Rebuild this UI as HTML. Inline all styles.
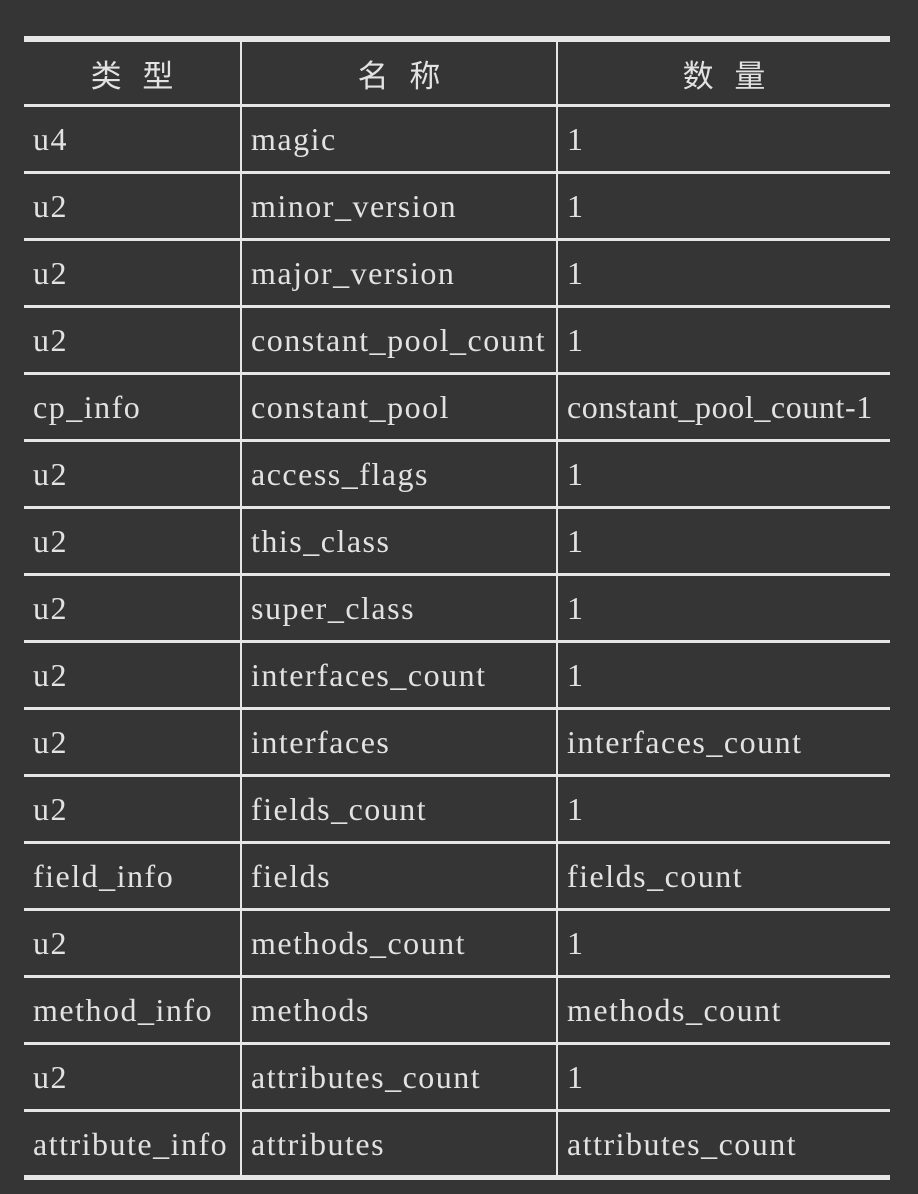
<!DOCTYPE html>
<html><head><meta charset="utf-8"><style>
html,body{margin:0;padding:0;background:#353535;width:918px;height:1194px;overflow:hidden}
.l{position:absolute;background:#e6e6e6}
.t{position:absolute;color:#e2e2e2;font-family:"Liberation Serif",serif;font-size:32px;letter-spacing:1.5px;line-height:67px;white-space:nowrap}
.h{font-family:"Noto Sans CJK SC","Noto Serif CJK SC",sans-serif;font-size:31px;letter-spacing:0;text-align:center;line-height:63px}
</style></head><body>
<div class="l" style="left:24px;top:36px;width:866px;height:6px"></div>
<div class="l" style="left:24px;top:1175px;width:866px;height:5px"></div>
<div class="l" style="left:240px;top:42px;width:2px;height:1133px"></div>
<div class="l" style="left:556px;top:42px;width:2px;height:1133px"></div>
<div class="t h" style="left:24px;top:42px;width:216px">类&nbsp;&nbsp;&nbsp;型</div>
<div class="t h" style="left:242px;top:42px;width:314px">名&nbsp;&nbsp;&nbsp;称</div>
<div class="t h" style="left:558px;top:42px;width:332px">数&nbsp;&nbsp;&nbsp;量</div>
<div class="l" style="left:24px;top:104px;width:866px;height:3px"></div>
<div class="t" style="left:33px;top:106px">u4</div><div class="t" style="left:251px;top:106px">magic</div><div class="t" style="left:567px;top:106px">1</div>
<div class="l" style="left:24px;top:171px;width:866px;height:3px"></div>
<div class="t" style="left:33px;top:173px">u2</div><div class="t" style="left:251px;top:173px">minor_version</div><div class="t" style="left:567px;top:173px">1</div>
<div class="l" style="left:24px;top:238px;width:866px;height:3px"></div>
<div class="t" style="left:33px;top:240px">u2</div><div class="t" style="left:251px;top:240px">major_version</div><div class="t" style="left:567px;top:240px">1</div>
<div class="l" style="left:24px;top:305px;width:866px;height:3px"></div>
<div class="t" style="left:33px;top:307px">u2</div><div class="t" style="left:251px;top:307px">constant_pool_count</div><div class="t" style="left:567px;top:307px">1</div>
<div class="l" style="left:24px;top:372px;width:866px;height:3px"></div>
<div class="t" style="left:33px;top:374px">cp_info</div><div class="t" style="left:251px;top:374px">constant_pool</div><div class="t" style="left:567px;top:374px;letter-spacing:0.6px">constant_pool_count-1</div>
<div class="l" style="left:24px;top:439px;width:866px;height:3px"></div>
<div class="t" style="left:33px;top:441px">u2</div><div class="t" style="left:251px;top:441px">access_flags</div><div class="t" style="left:567px;top:441px">1</div>
<div class="l" style="left:24px;top:506px;width:866px;height:3px"></div>
<div class="t" style="left:33px;top:508px">u2</div><div class="t" style="left:251px;top:508px">this_class</div><div class="t" style="left:567px;top:508px">1</div>
<div class="l" style="left:24px;top:573px;width:866px;height:3px"></div>
<div class="t" style="left:33px;top:575px">u2</div><div class="t" style="left:251px;top:575px">super_class</div><div class="t" style="left:567px;top:575px">1</div>
<div class="l" style="left:24px;top:640px;width:866px;height:3px"></div>
<div class="t" style="left:33px;top:642px">u2</div><div class="t" style="left:251px;top:642px">interfaces_count</div><div class="t" style="left:567px;top:642px">1</div>
<div class="l" style="left:24px;top:707px;width:866px;height:3px"></div>
<div class="t" style="left:33px;top:709px">u2</div><div class="t" style="left:251px;top:709px">interfaces</div><div class="t" style="left:567px;top:709px">interfaces_count</div>
<div class="l" style="left:24px;top:774px;width:866px;height:3px"></div>
<div class="t" style="left:33px;top:776px">u2</div><div class="t" style="left:251px;top:776px">fields_count</div><div class="t" style="left:567px;top:776px">1</div>
<div class="l" style="left:24px;top:841px;width:866px;height:3px"></div>
<div class="t" style="left:33px;top:843px">field_info</div><div class="t" style="left:251px;top:843px">fields</div><div class="t" style="left:567px;top:843px">fields_count</div>
<div class="l" style="left:24px;top:908px;width:866px;height:3px"></div>
<div class="t" style="left:33px;top:910px">u2</div><div class="t" style="left:251px;top:910px">methods_count</div><div class="t" style="left:567px;top:910px">1</div>
<div class="l" style="left:24px;top:975px;width:866px;height:3px"></div>
<div class="t" style="left:33px;top:977px">method_info</div><div class="t" style="left:251px;top:977px">methods</div><div class="t" style="left:567px;top:977px">methods_count</div>
<div class="l" style="left:24px;top:1042px;width:866px;height:3px"></div>
<div class="t" style="left:33px;top:1044px">u2</div><div class="t" style="left:251px;top:1044px">attributes_count</div><div class="t" style="left:567px;top:1044px">1</div>
<div class="l" style="left:24px;top:1109px;width:866px;height:3px"></div>
<div class="t" style="left:33px;top:1111px">attribute_info</div><div class="t" style="left:251px;top:1111px">attributes</div><div class="t" style="left:567px;top:1111px">attributes_count</div>
</body></html>
